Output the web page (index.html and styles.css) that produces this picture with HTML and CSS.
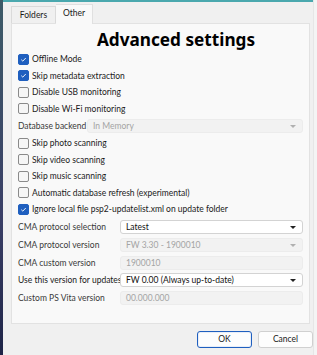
FILE: index.html
```html
<!DOCTYPE html>
<html>
<head>
<meta charset="utf-8">
<link rel="stylesheet" href="styles.css">
</head>
<body>
<div class="screen">
  <div class="desk"></div>
  <div class="dialog">
    <div class="tabs">
      <div class="tab">Folders</div>
      <div class="tab active">Other</div>
    </div>
    <div class="panel">
      <h1 class="title">Advanced settings</h1>
      <div class="check on"><span class="box"><svg viewBox="0 0 12 12"><path d="M3 6.2 5.1 8.2 9 4" /></svg></span>Offline Mode</div>
      <div class="check on"><span class="box"><svg viewBox="0 0 12 12"><path d="M3 6.2 5.1 8.2 9 4" /></svg></span>Skip metadata extraction</div>
      <div class="check"><span class="box"></span>Disable USB monitoring</div>
      <div class="check"><span class="box"></span>Disable Wi-Fi monitoring</div>
      <div class="dbrow">
        <span class="lbl">Database backend</span>
        <div class="combo disabled db">In Memory<span class="arrow"></span></div>
      </div>
      <div class="check"><span class="box"></span>Skip photo scanning</div>
      <div class="check"><span class="box"></span>Skip video scanning</div>
      <div class="check"><span class="box"></span>Skip music scanning</div>
      <div class="check"><span class="box"></span>Automatic database refresh (experimental)</div>
      <div class="check on"><span class="box"><svg viewBox="0 0 12 12"><path d="M3 6.2 5.1 8.2 9 4" /></svg></span>Ignore local file psp2-updatelist.xml on update folder</div>
      <div class="form">
        <span class="lbl">CMA protocol selection</span>
        <div class="combo">Latest<span class="arrow"></span></div>
        <span class="lbl">CMA protocol version</span>
        <div class="combo disabled">FW 3.30 - 1900010<span class="arrow"></span></div>
        <span class="lbl">CMA custom version</span>
        <div class="field disabled">1900010</div>
        <span class="lbl dark">Use this version for updates</span>
        <div class="combo">FW 0.00 (Always up-to-date)<span class="arrow"></span></div>
        <span class="lbl">Custom PS Vita version</span>
        <div class="field disabled">00.000.000</div>
      </div>
    </div>
    <div class="buttons">
      <div class="btn default">OK</div>
      <div class="btn">Cancel</div>
    </div>
  </div>
  <div class="edge"></div>
</div>
</body>
</html>
```

FILE: styles.css
```css
* { box-sizing: border-box; }
html, body { margin: 0; padding: 0; }
body {
  width: 317px;
  height: 355px;
  overflow: hidden;
  font-family: Lato, "Noto Sans", sans-serif;
  font-size: 8.5px;
  color: #1a1a1a;
  background: #f0f0f0;
}
.screen {
  display: flex;
  width: 317px;
  height: 355px;
}
.desk {
  width: 3px;
  background: linear-gradient(#3d5b68, #3a3f66 60%, #1e2447);
}
.edge {
  width: 4px;
  background: #f4f4f4;
  border-left: 1px solid #e6e6e6;
}
.dialog {
  flex: 1;
  display: flex;
  flex-direction: column;
  background: #f0f0f0;
  border-top: 2px solid #4aa8ae;
  padding: 2px 0 0 8px;
}
.tabs {
  display: flex;
  align-items: flex-end;
  height: 19px;
  position: relative;
  z-index: 1;
}
.tab {
  height: 17px;
  width: 45px;
  text-align: center;
  line-height: 16px;
  border: 1px solid #dadada;
  border-bottom: none;
  background: #f0f0f0;
}
.tab.active {
  width: 37px;
  height: 20px;
  line-height: 17px;
  background: #f9f9f9;
  border-color: #e0e0e0;
  margin-bottom: -1px;
  border-left: none;
}
.panel {
  width: 299px;
  height: 301px;
  background: #f9f9f9;
  border: 1px solid #e2e2e2;
  padding: 0 6px;
  display: flex;
  flex-direction: column;
}
.title {
  margin: 6px 0 0.75px 0;
  padding-left: 31px;
  text-align: center;
  font-family: "Noto Sans", sans-serif;
  font-size: 17.2px;
  font-weight: bold;
  line-height: 20px;
  color: #000;
}
.check {
  display: flex;
  align-items: center;
  height: 16.5px;
  white-space: nowrap;
}
.box {
  width: 11px;
  height: 11px;
  border: 1px solid #8a8a8a;
  border-radius: 2px;
  background: #f6f6f6;
  margin: 0 3px 0 0;
  display: flex;
  align-items: center;
  justify-content: center;
  flex: none;
}
.check.on .box {
  background: #1f5fbf;
  border-color: #1f5fbf;
}
.box svg {
  width: 11px;
  height: 11px;
  fill: none;
  stroke: #fff;
  stroke-width: 1.2;
}
.dbrow {
  display: flex;
  align-items: center;
  height: 18px;
}
.dbrow .lbl { width: 69px; flex: none; white-space: nowrap; }
.combo, .field {
  position: relative;
  height: 14px;
  line-height: 12px;
  padding: 0 5px;
  border: 1px solid #d3d3d3;
  border-radius: 3px;
  background: #fff;
  color: #111;
  white-space: nowrap;
}
.combo.disabled, .field.disabled {
  background: #f2f2f2;
  border-color: #ececec;
  color: #a4a4a4;
}
.db { flex: 1; }
.arrow {
  position: absolute;
  right: 6px;
  top: 5px;
  width: 0;
  height: 0;
  border-left: 3px solid transparent;
  border-right: 3px solid transparent;
  border-top: 3px solid #222;
}
.disabled .arrow { border-top-color: #b0b0b0; }
.form {
  display: grid;
  grid-template-columns: 102px 1fr;
  row-gap: 3.75px;
  align-items: center;
  margin-top: 2.75px;
}
.form .lbl { white-space: nowrap; }
.lbl { color: #3a3a3a; }
.lbl.dark { color: #1a1a1a; }
.buttons {
  display: flex;
  justify-content: flex-end;
  gap: 6px;
  padding: 7px 0 0 0;
}
.btn {
  width: 55px;
  height: 17px;
  line-height: 15px;
  text-align: center;
  border: 1px solid #d0d0d0;
  border-radius: 3px;
  background: #fdfdfd;
}
.btn.default {
  border: 1px solid #1f5fbf;
  box-shadow: inset 0 0 0 1px #e8eef8;
}
```
